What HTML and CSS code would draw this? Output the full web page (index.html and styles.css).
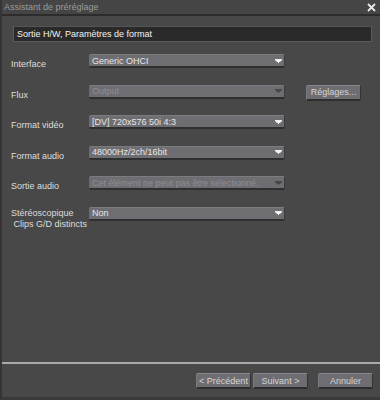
FILE: index.html
```html
<!DOCTYPE html>
<html lang="fr">
<head>
<meta charset="utf-8">
<title>Assistant de préréglage</title>
<link rel="stylesheet" href="styles.css">
</head>
<body>
<div class="window">
  <div class="titlebar">
    <span class="title">Assistant de préréglage</span>
    <svg class="close" width="9" height="9" viewBox="0 0 9 9"><path d="M1 1 L8 8 M8 1 L1 8" stroke="#e8e8e8" stroke-width="1.8" fill="none"/></svg>
  </div>
  <div class="content">
    <div class="heading">Sortie H/W, Paramètres de format</div>
    <div class="form">
      <div class="label">Interface</div>
      <div class="select"><span>Generic OHCI</span><svg class="arrow" width="7" height="4" viewBox="0 0 7 4"><path d="M0 0H7V1L5 3H4V4H3V3H2L0 1Z" fill="#f2f2f2"/></svg></div>
      <div></div>

      <div class="label">Flux</div>
      <div class="select disabled"><span>Output</span><svg class="arrow" width="7" height="4" viewBox="0 0 7 4"><path d="M0 0H7V1L5 3H4V4H3V3H2L0 1Z" fill="#45454a"/></svg></div>
      <div class="btn settings">Réglages...</div>

      <div class="label">Format vidéo</div>
      <div class="select"><span>[DV] 720x576 50i 4:3</span><svg class="arrow" width="7" height="4" viewBox="0 0 7 4"><path d="M0 0H7V1L5 3H4V4H3V3H2L0 1Z" fill="#f2f2f2"/></svg></div>
      <div></div>

      <div class="label">Format audio</div>
      <div class="select"><span>48000Hz/2ch/16bit</span><svg class="arrow" width="7" height="4" viewBox="0 0 7 4"><path d="M0 0H7V1L5 3H4V4H3V3H2L0 1Z" fill="#f2f2f2"/></svg></div>
      <div></div>

      <div class="label">Sortie audio</div>
      <div class="select disabled"><span>Cet élément ne peut pas être sélectionné.</span><svg class="arrow" width="7" height="4" viewBox="0 0 7 4"><path d="M0 0H7V1L5 3H4V4H3V3H2L0 1Z" fill="#45454a"/></svg></div>
      <div></div>

      <div class="label two">Stéréoscopique<br>&nbsp;Clips G/D distincts</div>
      <div class="select"><span>Non</span><svg class="arrow" width="7" height="4" viewBox="0 0 7 4"><path d="M0 0H7V1L5 3H4V4H3V3H2L0 1Z" fill="#f2f2f2"/></svg></div>
      <div></div>
    </div>
    <div class="spacer"></div>
    <div class="separator"></div>
    <div class="footer">
      <div class="btn nav">&lt; Précédent</div>
      <div class="btn nav">Suivant &gt;</div>
      <div class="btn cancel">Annuler</div>
    </div>
  </div>
</div>
</body>
</html>
```
FILE: styles.css
```css
* { box-sizing: border-box; }
html, body { margin: 0; padding: 0; background: #474747; }
body {
  font-family: "Liberation Sans", Arial, sans-serif;
  font-size: 9px;
  color: #dcdcdc;
}
.window {
  width: 380px;
  height: 400px;
  background: #484848;
  border-left: 2px solid #353535;
  border-bottom: 3px solid #3a3a3a;
  display: flex;
  flex-direction: column;
}
.titlebar {
  height: 16px;
  flex: none;
  display: flex;
  align-items: center;
  justify-content: space-between;
  padding: 0 4px 1px 2px;
  background: #454545;
  border-bottom: 2px solid #2c2c2c;
}
.title { color: #9b9b9b; font-size: 9px; }
.close { display: block; margin-top: 1px; }
.content {
  flex: 1;
  display: flex;
  flex-direction: column;
}
.heading {
  margin: 10px 8px 0 11px;
  height: 16px;
  background: #2a2a2a;
  border: 1px solid #5c5c5c;
  border-top-color: #555;
  color: #f4f4f4;
  font-size: 9px;
  line-height: 14px;
  padding-left: 3px;
}
.form {
  margin: 12px 0 0 9px;
  display: grid;
  grid-template-columns: 78px 196px 76px;
  grid-auto-rows: 14px;
  row-gap: 16.6px;
  align-items: start;
}
.label {
  padding-top: 5px;
  line-height: 11px;
  color: #dedede;
  white-space: nowrap;
}
.label.two { padding-top: 1px; line-height: 11px; }
.select {
  height: 14px;
  display: flex;
  align-items: center;
  justify-content: space-between;
  background: #6e6d72;
  border-top: 1px solid #7c7b80;
  border-bottom: 2px solid #2f2f2f;
  border-right: 1px solid #3a3a3a;
  border-radius: 2px;
  padding: 0 2px 0 3px;
  color: #e6e6e6;
  overflow: hidden;
  white-space: nowrap;
}
.select.disabled { color: #8e8d93; }
.arrow { flex: none; display: block; }
.btn {
  height: 16px;
  display: flex;
  align-items: center;
  justify-content: center;
  background: #6e6d72;
  border-top: 1px solid #8a898f;
  border-left: 1px solid #7a797e;
  border-bottom: 2px solid #2e2e2e;
  border-right: 1px solid #333;
  border-radius: 2px;
  color: #d4d4d6;
  white-space: nowrap;
}
.settings { width: 55px; margin-left: 21px; height: 16px; }
.spacer { flex: 1; }
.separator {
  height: 2px;
  background: #a9a9a9;
  margin-bottom: 9px;
}
.footer {
  display: flex;
  justify-content: flex-end;
  padding-right: 7px;
  margin-bottom: 8px;
}
.nav { width: 55px; margin-right: 2px; }
.cancel { width: 55px; margin-left: 8px; }
```
